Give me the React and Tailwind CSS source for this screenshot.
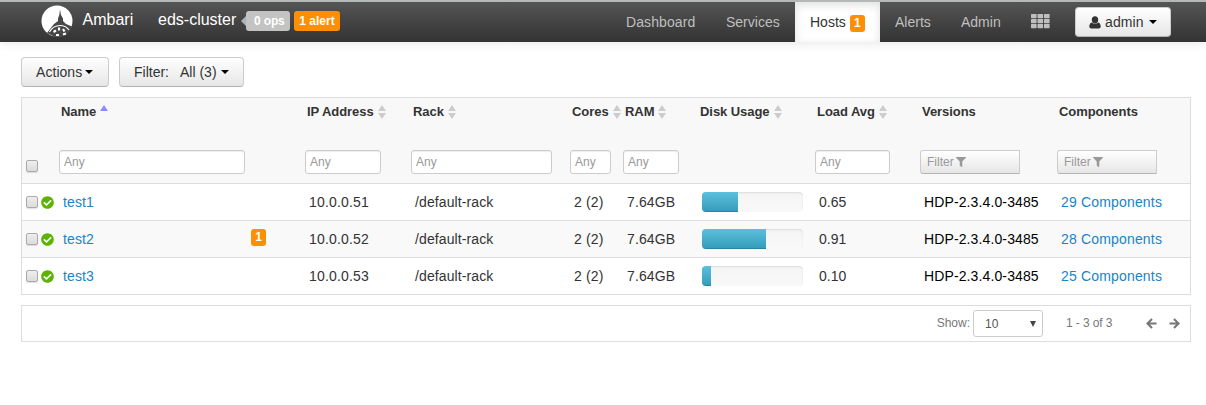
import { FaCheckCircle, FaFilter } from "react-icons/fa";

const cols = "grid grid-cols-[37px_246px_106px_159px_53px_75px_117px_105px_137px_1fr]";

function Caret() {
  return <span className="inline-block border-x-4 border-t-4 border-x-transparent border-t-black" />;
}

function Sort() {
  return (
    <svg width="8" height="14" viewBox="0 0 8 14" className="mt-[7px] shrink-0 fill-[#ccc]">
      <path d="M4 0 8 6H0ZM0 8H8L4 14Z" />
    </svg>
  );
}

function Arrow({ flip }) {
  return (
    <svg width="11" height="11" viewBox="0 0 11 11" className={flip ? "ml-3 -scale-x-100" : ""}>
      <path d="M10.500 5.500H2M6 1 1.500 5.500 6 10" fill="none" stroke="#777" strokeWidth="2.100" />
    </svg>
  );
}

function Check() {
  return (
    <span className="block h-3 w-3 rounded-[2px] border border-[#aaa] bg-linear-to-b from-[#eee] to-[#dcdcdc] shadow-[0_1px_1px_rgba(0,0,0,0.12)]" />
  );
}

function Any({ w }) {
  return (
    <div className={`${w} -ml-[2px] h-6 rounded-[3px] border border-[#ccc] bg-white pl-1 text-xs leading-[22px] text-[#999] shadow-[inset_0_1px_1px_rgba(0,0,0,0.075)]`}>
      Any
    </div>
  );
}

function FilterButton() {
  return (
    <div className="-ml-[2px] flex h-6 w-[100px] items-center gap-[2px] rounded-l-[3px] border border-[#ccc] border-b-[#b3b3b3] bg-linear-to-b from-white to-[#e6e6e6] pl-1.5 text-xs text-[#999]">
      Filter
      <FaFilter size={10} />
    </div>
  );
}

function Head({ label, w, filter, asc, sort = true }) {
  return (
    <div className="flex flex-col pl-[2px]">
      <div className="flex h-[52px] gap-1 text-[13px] leading-[28px] font-bold tracking-[-0.06px] whitespace-nowrap text-[#333]">
        <span>{label}</span>
        {asc ? (
          <svg width="8" height="6" viewBox="0 0 8 6" className="mt-[7px] fill-[#8c8cff]"><path d="M4 0 8 6H0Z" /></svg>
        ) : (
          sort && <Sort />
        )}
      </div>
      {filter ? <FilterButton /> : w && <Any w={w} />}
    </div>
  );
}

function Row({ name, ip, used, load, comps, alert, odd }) {
  return (
    <div className={`${cols} h-[37px] border-t border-[#ddd] text-sm leading-[36px] whitespace-nowrap text-[#333] ${odd ? "bg-[#f9f9f9]" : "bg-white"}`}>
      <div className="flex items-center gap-[3px] pl-1">
        <Check />
        <FaCheckCircle size={13} className="text-[#5ab400]" />
      </div>
      <div className="flex pl-1 text-[#1a84c7]">
        <span className="flex-1 tracking-[0.1px]">{name}</span>
        {alert && (
          <span className="mt-2 mr-[39px] h-[17px] w-[15px] rounded-[3px] bg-[#ff8e00] text-center text-xs leading-[16px] font-bold text-white">{alert}</span>
        )}
      </div>
      <div className="pl-1 tracking-[0.17px]">{ip}</div>
      <div className="pl-1 tracking-[0.1px]">/default-rack</div>
      <div className="pl-1 tracking-[0.15px]">2 (2)</div>
      <div className="pl-1 tracking-[0.1px]">7.64GB</div>
      <div className="pl-1">
        <div className="mt-2 h-5 w-[101px] overflow-hidden rounded bg-linear-to-b from-[#f4f4f4] to-[#f9f9f9] shadow-[inset_0_1px_2px_rgba(0,0,0,0.1)]">
          <div style={{ width: used }} className="h-full bg-linear-to-b from-[#5bc0de] to-[#339bb9] shadow-[inset_0_-1px_0_rgba(0,0,0,0.15)]" />
        </div>
      </div>
      <div className="pl-1">{load}</div>
      <div className="pl-1 tracking-[0.12px] text-black">HDP-2.3.4.0-3485</div>
      <div className="pl-1 tracking-[0.17px] text-[#1a84c7]">{comps} Components</div>
    </div>
  );
}

const button = "flex items-center rounded border border-[#ccc] border-b-[#b3b3b3] bg-linear-to-b from-white to-[#e6e6e6] text-sm text-[#333]";

export default function App() {
  return (
    <div className="h-[405px] w-[1206px] overflow-hidden bg-white font-['Liberation_Sans',Arial,sans-serif]">
      <header className="flex h-[42px] border-t-2 border-[#b5b8b8] bg-linear-to-b from-[#555] to-[#333] text-sm shadow-[0_1px_10px_rgba(0,0,0,0.1)]">
        <svg width="32" height="32" viewBox="0 0 32 32" className="mt-[3px] ml-[41px]">
          <circle cx="16" cy="16" r="15.500" fill="#fff" />
          <path d="M19 4.500 20 10 22 13.500V16L25 19 31 21.500 29 26 24 31 14 32 6 28 9 24 13 19 17 16V13.500L18.300 10Z" fill="#484848" />
          <path d="M8.500 27Q12 20.500 19 20.500Q25 20.500 28 25" fill="none" stroke="#fff" strokeWidth="1.200" />
          <path d="M12.500 27 15 25.500M18 22.500V25.500M23.500 26.500 22 24M15 30H18M22 29.500 25 28.500" stroke="#fff" strokeWidth="2.200" />
        </svg>
        <span className="ml-[9.500px] w-[75.500px] text-base leading-[36px] text-white">Ambari</span>
        <span className="w-[83px] text-base leading-[36px] text-white">eds-cluster</span>
        <span className="mt-[14px] h-0 w-0 border-y-[5px] border-r-[5px] border-y-transparent border-r-[#a9b4bd]" />
        <span className="mt-[9px] h-5 w-11 rounded-[3px] bg-[#c3c3c3] pl-2 text-xs leading-5 font-bold tracking-[-0.15px] text-white">0 ops</span>
        <span className="mt-[9px] ml-1 h-5 w-[46px] rounded-[3px] bg-[#ff8e00] text-center text-xs leading-5 font-bold text-white">1 alert</span>
        <nav className="ml-auto flex h-10 leading-10 text-[#bfbfbf]">
          <span className="w-[100px] tracking-[0.1px]">Dashboard</span>
          <span className="w-[69px]">Services</span>
          <span className="flex w-[85px] gap-1 bg-white pl-[15px] text-[#333] shadow-[inset_0_3px_8px_rgba(0,0,0,0.125)]">
            Hosts
            <span className="mt-[13px] h-[17px] w-[15px] rounded-[3px] bg-[#ff8e00] text-center text-xs leading-[16px] font-bold text-white">1</span>
          </span>
          <span className="w-[66px] pl-[15px]">Alerts</span>
          <span className="w-[85px] pl-[15px]">Admin</span>
          <svg width="19" height="15" viewBox="0 0 19 15" className="mt-3 fill-[#bfbfbf]">
            {[0, 6.500, 13].map((x) =>
              [0, 5, 10].map((y) => <rect key={`${x}-${y}`} x={x} y={y} width="5.600" height="4.200" rx="0.600" />)
            )}
          </svg>
        </nav>
        <div className={`${button} mt-[5px] mr-[35px] ml-[25px] h-[30px] w-24 pl-[13px]`}>
          <svg width="12" height="13" viewBox="0 0 12 13" className="fill-[#333]">
            <ellipse cx="6" cy="3.800" rx="3.200" ry="3.600" />
            <path d="M2.700 6.500Q6 9 9.300 6.500Q11.700 7.200 11.700 10.800Q11.600 12.600 9.800 12.600H2.200Q.4 12.600.3 10.800Q.3 7.200 2.700 6.500Z" />
          </svg>
          <span className="mr-[5px] ml-1 tracking-[0.1px]">admin</span>
          <Caret />
        </div>
      </header>
      <main className="px-[21px] pt-[15px]">
        <div className="flex gap-[10px]">
          <div className={`${button} h-[30px] w-[88px] pl-[14px]`}>
            <span className="mr-[3px] tracking-[0.05px]">Actions</span><Caret />
          </div>
          <div className={`${button} h-[30px] w-[125px] pl-[14px]`}>
            <span className="mr-[11px]">Filter:</span>
            <span className="mr-1">All (3)</span><Caret />
          </div>
        </div>
        <section className="mt-[10px] h-[198px] w-[1170px] border border-[#ddd]">
          <div className={`${cols} h-[85px] bg-[#f8f8f8]`}>
            <div className="flex flex-col justify-end pb-[11px] pl-1"><Check /></div>
            <Head label="Name" asc w="w-[186px]" />
            <Head label="IP Address" w="w-[76px]" />
            <Head label="Rack" w="w-[141px]" />
            <Head label="Cores" w="w-[41px]" />
            <Head label="RAM" w="w-[56px]" />
            <Head label="Disk Usage" />
            <Head label="Load Avg" w="w-[75px]" />
            <Head label="Versions" filter sort={false} />
            <Head label="Components" filter sort={false} />
          </div>
          <Row name="test1" ip="10.0.0.51" used="36%" load="0.65" comps="29" />
          <Row name="test2" ip="10.0.0.52" used="63.500%" load="0.91" comps="28" alert="1" odd />
          <Row name="test3" ip="10.0.0.53" used="9%" load="0.10" comps="25" />
        </section>
        <footer className="mt-[10px] flex h-[37px] w-[1170px] items-center justify-end border border-[#ddd] pr-[10px] text-xs text-[#777]">
          <span className="-mt-px">Show:</span>
          <span className="ml-[3px] flex h-[27px] w-[70px] items-center justify-between rounded-[3px] border border-[#ccc] bg-white pr-[6px] pl-[11px] text-[#555]">
            10
            <span className="border-x-[3px] border-t-[6px] border-x-transparent border-t-[#444]" />
          </span>
          <span className="-mt-px ml-[23px] w-20 tracking-[-0.1px]">1 - 3 of 3</span>
          <Arrow />
          <Arrow flip />
        </footer>
      </main>
    </div>
  );
}
